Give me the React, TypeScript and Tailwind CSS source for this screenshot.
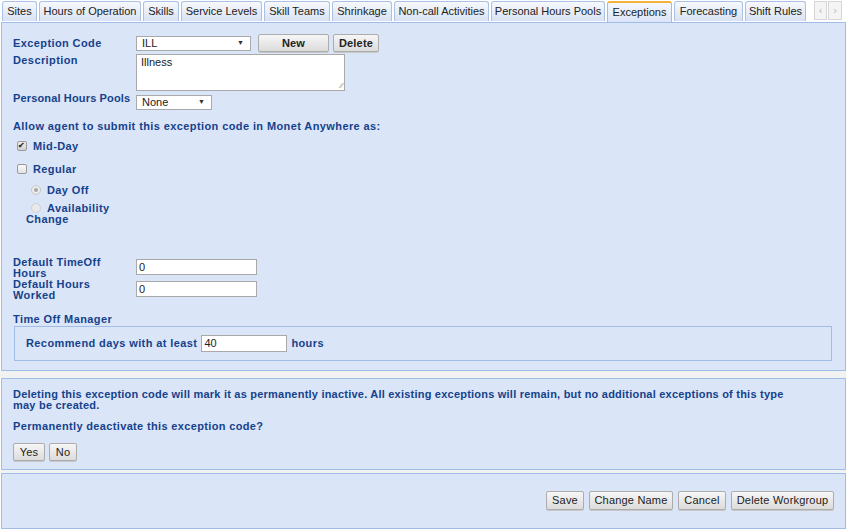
import React from 'react';

const tabs = [
  { label: 'Sites', w: 35 },
  { label: 'Hours of Operation', w: 102 },
  { label: 'Skills', w: 36 },
  { label: 'Service Levels', w: 81 },
  { label: 'Skill Teams', w: 66 },
  { label: 'Shrinkage', w: 60 },
  { label: 'Non-call Activities', w: 95 },
  { label: 'Personal Hours Pools', w: 114 },
  { label: 'Exceptions', w: 65, active: true },
  { label: 'Forecasting', w: 69 },
  { label: 'Shift Rules', w: 61 },
];

const font = { fontFamily: '"Liberation Sans", Arial, sans-serif' };

function Btn({ children, w, h = 18, bold = false }: { children: React.ReactNode; w: number; h?: number; bold?: boolean }) {
  return (
    <button
      className={
        'flex items-center justify-center rounded-[2px] border border-[#acacac] bg-gradient-to-b from-[#f6f6f6] to-[#dcdcdc] text-[11px] tracking-[0.2px] text-[#222] shadow-[0_1px_0_#c8c8c8] ' +
        (bold ? 'font-bold' : 'font-normal')
      }
      style={{ width: w, height: h }}
    >
      {children}
    </button>
  );
}

function Select({ value, w }: { value: string; w: number }) {
  return (
    <div
      className="flex h-[15px] items-center justify-between border border-[#a9a9a9] bg-white pl-[5px] pr-[6px] text-[11px] font-normal tracking-normal text-[#222]"
      style={{ width: w }}
    >
      <span>{value}</span>
      <span className="text-[7px] text-[#333]">▼</span>
    </div>
  );
}

export default function App() {
  return (
    <div className="relative h-[530px] w-[846px] overflow-hidden bg-white text-[#15428b]" style={font}>
      {/* tab strip */}
      <div className="flex h-[22px] items-end pl-[2px]">
        <div className="flex gap-[2px]">
          {tabs.map((t) => (
            <div
              key={t.label}
              className={
                t.active
                  ? 'flex h-[21px] items-center justify-center rounded-t-[3px] border border-b-0 border-[#9fbde6] border-t-2 border-t-[#f3b23a] bg-gradient-to-b from-[#f4f7fd] to-[#dbe5f8] text-[11px] text-[#222]'
                  : 'flex h-[20px] items-center justify-center rounded-t-[3px] border border-b-0 border-[#a9c1e6] bg-gradient-to-b from-[#f7f9fd] to-[#d8e2f3] text-[11px] text-[#222]'
              }
              style={{ width: t.w }}
            >
              {t.label}
            </div>
          ))}
        </div>
        <div className="mb-[2px] ml-[8px] flex gap-[1px]">
          <div className="flex h-[19px] w-[13px] items-center justify-center border border-[#d6d6d6] bg-[#f4f4f4] text-[11px] text-[#bbb]">‹</div>
          <div className="flex h-[19px] w-[14px] items-center justify-center border border-[#d6d6d6] bg-[#f4f4f4] text-[11px] text-[#bbb]">›</div>
        </div>
      </div>

      {/* main panel */}
      <div className="ml-[1px] h-[349px] w-[845px] border border-[#9fbde6] bg-[#dbe5f8] pl-[11px] pt-[11px] text-[11px] font-bold tracking-[0.4px]">
        <div className="flex h-[18px] items-center">
          <div className="w-[123px]">Exception Code</div>
          <Select value="ILL" w={115} />
          <div className="ml-[7px]">
            <Btn w={71} bold>New</Btn>
          </div>
          <div className="ml-[4px]">
            <Btn w={46} bold>Delete</Btn>
          </div>
        </div>

        <div className="mt-[2px] flex">
          <div className="-mt-[2px] w-[123px]">Description</div>
          <div className="relative h-[37px] w-[209px] border border-[#a9a9a9] bg-white px-[4px] text-[11px] font-normal leading-[14px] tracking-normal text-[#222]">
            Illness
            <span className="absolute bottom-0 right-[1px] text-[8px] leading-none text-[#999]">⁄⁄</span>
          </div>
        </div>

        <div className="mt-[4px] flex items-start">
          <div className="-mt-[5px] w-[123px] tracking-[0.15px]">Personal Hours Pools</div>
          <Select value="None" w={76} />
        </div>

        <div className="mt-[9px] leading-[14px]">Allow agent to submit this exception code in Monet Anywhere as:</div>

        <div className="mt-[6px] flex h-[14px] items-center">
          <div className="ml-[4px] flex h-[10px] w-[10px] items-center justify-center rounded-[2px] border border-[#9a9a9a] bg-gradient-to-b from-[#f0f0f0] to-[#cfcfcf] text-[8px] leading-none text-[#333]">✔</div>
          <span className="ml-[6px]">Mid-Day</span>
        </div>

        <div className="mt-[9px] flex h-[14px] items-center">
          <div className="ml-[4px] h-[10px] w-[10px] rounded-[2px] border border-[#9a9a9a] bg-gradient-to-b from-[#fafafa] to-[#e2e2e2]" />
          <span className="ml-[6px]">Regular</span>
        </div>

        <div className="mt-[7px] flex h-[14px] items-center">
          <div className="ml-[18px] flex h-[10px] w-[10px] items-center justify-center rounded-full border border-[#c6c6c6] bg-[#ececec]">
            <div className="h-[4px] w-[4px] rounded-full bg-[#a8a8a8]" />
          </div>
          <span className="ml-[6px]">Day Off</span>
        </div>

        <div className="ml-[13px] mt-[6px] w-[95px] leading-[11px]">
          <span className="ml-[5px] mr-[6px] inline-block h-[10px] w-[10px] rounded-full border border-[#cfcfcf] bg-[#e9e9e9] align-[-1px]" />
          Availability Change
        </div>

        <div className="mt-[33px] flex h-[21px] items-start">
          <div className="-mt-[1px] w-[123px] leading-[10.5px]">
            Default TimeOff
            <br />
            Hours
          </div>
          <div className="mt-[1px] h-[16px] w-[121px] border border-[#a9a9a9] bg-white pl-[2px] text-[11px] font-normal leading-[14px] tracking-normal text-[#222]">0</div>
        </div>
        <div className="mt-[1px] flex h-[21px] items-start">
          <div className="-mt-[1px] w-[123px] leading-[10.5px]">
            Default Hours
            <br />
            Worked
          </div>
          <div className="mt-[1px] h-[16px] w-[121px] border border-[#a9a9a9] bg-white pl-[2px] text-[11px] font-normal leading-[14px] tracking-normal text-[#222]">0</div>
        </div>

        <div className="mt-[11px] leading-[14px]">Time Off Manager</div>

        <div className="ml-[1px] mr-[13px] flex h-[35px] items-center border border-[#9fbde6] pl-[11px]">
          <span>Recommend days with at least</span>
          <div className="ml-[4px] h-[17px] w-[86px] border border-[#a9a9a9] bg-white pl-[2px] text-[11px] font-normal leading-[15px] tracking-normal text-[#222]">40</div>
          <span className="ml-[4px]">hours</span>
        </div>
      </div>

      {/* gap */}
      <div className="h-[7px] bg-[#f2f2f2]" />

      {/* delete confirmation */}
      <div className="ml-[1px] h-[92px] w-[845px] border border-[#9fbde6] bg-[#dbe5f8] pl-[11px] pt-[10px] text-[11px] font-bold tracking-[0.22px]">
        <div className="leading-[11px]">
          Deleting this exception code will mark it as permanently inactive. All existing exceptions will remain, but no additional exceptions of this type
          <br />
          may be created.
        </div>
        <div className="mt-[9px] leading-[12px] tracking-[0.35px]">Permanently deactivate this exception code?</div>
        <div className="mt-[11px] flex gap-[4px] tracking-normal">
          <Btn w={32}>Yes</Btn>
          <Btn w={28}>No</Btn>
        </div>
      </div>

      <div className="h-[3px] bg-[#f2f2f2]" />

      {/* action bar */}
      <div className="ml-[1px] flex h-[56px] w-[845px] items-start justify-end gap-[5px] border border-[#9fbde6] bg-[#dbe5f8] pr-[11px] pt-[17px]">
        <Btn w={38} h={19}>Save</Btn>
        <Btn w={84} h={19}>Change Name</Btn>
        <Btn w={48} h={19}>Cancel</Btn>
        <Btn w={103} h={19}>Delete Workgroup</Btn>
      </div>
    </div>
  );
}
